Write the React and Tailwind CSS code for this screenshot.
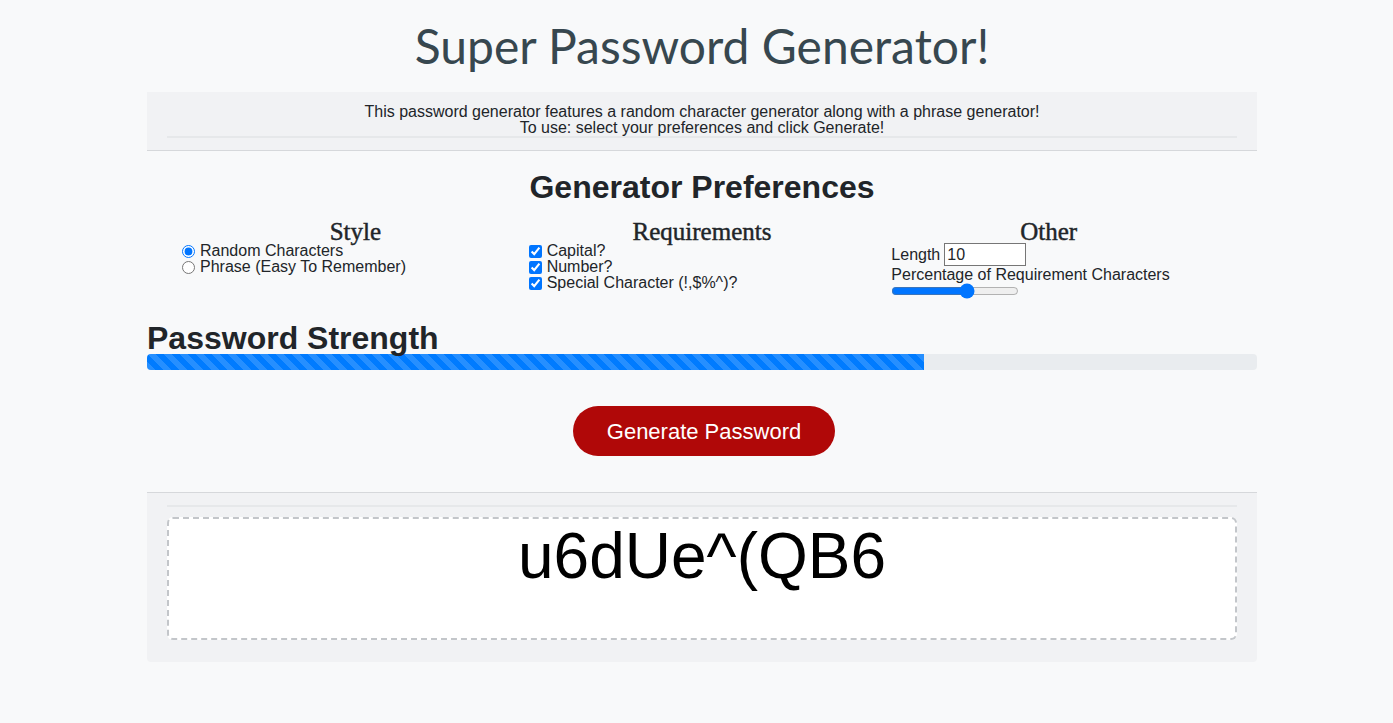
import React, { useState } from "react";

const App = () => {
  const [style, setStyle] = useState("random");
  const [length, setLength] = useState("10");
  const [percent, setPercent] = useState(60);

  const colHeading = "pt-[17px] text-center font-['Liberation_Serif',serif] text-[25px] font-normal leading-[22px] [-webkit-text-stroke:0.45px_#212529]";

  return (
    <div className="min-h-screen w-full bg-[#f8f9fa] font-['Liberation_Sans',Arial,sans-serif] text-[#212529]">
      <div className="ml-[147px] w-[1110px]">
        <h1 className="pt-[17px] pb-[17px] text-center font-['Lato',sans-serif] text-[48px] leading-[58px] text-[#37474f]">
          Super Password Generator!
        </h1>

        {/* intro */}
        <div className="border-b border-[#d6d8db] bg-[#f1f2f4] px-5 pt-[12px] pb-[12px] text-center text-[16px] leading-[16px]">
          <p>This password generator features a random character generator along with a phrase generator!</p>
          <p>To use: select your preferences and click Generate!</p>
          <div className="h-[2px] bg-[#e6e8ea]" />
        </div>

        {/* preferences */}
        <h2 className="mt-[19px] text-center text-[32px] font-bold leading-[34px]">Generator Preferences</h2>
        <div className="grid grid-cols-3 px-5 text-[16px] leading-[16px]">
          <div>
            <h3 className={`pl-5 ${colHeading}`}>Style</h3>
            <div className="pl-[15px]">
              <label className="flex items-center gap-[5px]">
                <input type="radio" name="style" checked={style === "random"} onChange={() => setStyle("random")} className="m-0 h-[13px] w-[13px]" />
                Random Characters
              </label>
              <label className="flex items-center gap-[5px]">
                <input type="radio" name="style" checked={style === "phrase"} onChange={() => setStyle("phrase")} className="m-0 h-[13px] w-[13px]" />
                Phrase (Easy To Remember)
              </label>
            </div>
          </div>
          <div>
            <h3 className={colHeading}>Requirements</h3>
            <div className="pl-[5px]">
              {["Capital?", "Number?", "Special Character (!,$%^)?"].map((label) => (
                <label key={label} className="flex items-center gap-[5px]">
                  <input type="checkbox" defaultChecked className="m-0 h-[13px] w-[13px]" />
                  {label}
                </label>
              ))}
            </div>
          </div>
          <div>
            <h3 className={`pr-5 ${colHeading}`}>Other</h3>
            <div className="pl-[11px]">
              <label className="flex items-center gap-[4px]">
                Length
                <input
                  type="text"
                  value={length}
                  onChange={(e) => setLength(e.target.value)}
                  className="h-[23px] w-[82px] border border-[#767676] bg-white px-[2px] text-[16px] outline-none"
                />
              </label>
              <p className="mt-[1px]">Percentage of Requirement Characters</p>
              <input
                type="range"
                min="0"
                max="100"
                value={percent}
                onChange={(e) => setPercent(e.target.value)}
                className="m-0 block w-[128px] accent-[#0075ff]"
              />
            </div>
          </div>
        </div>

        {/* strength */}
        <h2 className="mt-[23px] text-[32px] font-bold leading-[32px]">Password Strength</h2>
        <div className="h-4 w-full overflow-hidden rounded bg-[#e9ecef]">
          <div className="h-full w-[70%] bg-[#007bff] bg-[linear-gradient(45deg,rgba(255,255,255,.15)_25%,transparent_25%,transparent_50%,rgba(255,255,255,.15)_50%,rgba(255,255,255,.15)_75%,transparent_75%,transparent)] bg-[length:16px_16px]" />
        </div>

        <div className="flex justify-center pl-[4px] pt-[36px] pb-[36px]">
          <button className="h-[50px] w-[262px] rounded-full bg-[#b00808] text-[22px] text-white">
            Generate Password
          </button>
        </div>

        {/* output */}
        <div className="rounded-b border-t border-[#d6d8db] bg-[#f1f2f4] px-5 pt-3 pb-[22px]">
          <div className="h-[2px] bg-[#e6e8ea]" />
          <div className="mt-[10px] h-[123px] rounded-md border-2 border-dashed border-[#c3c6ca] bg-white text-center text-[64px] leading-[74px] text-black">
            u6dUe^(QB6
          </div>
        </div>
      </div>
    </div>
  );
};

export default App;
